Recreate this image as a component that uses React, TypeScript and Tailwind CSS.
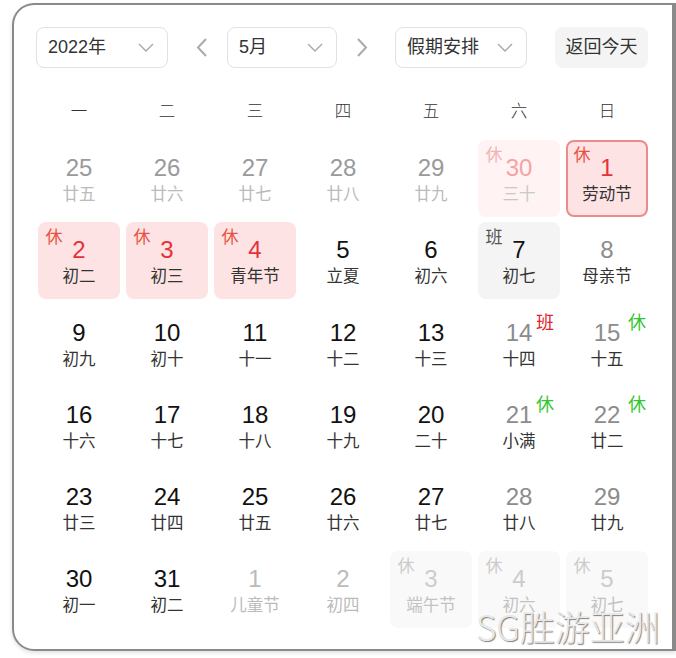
import React from "react";

type Kind =
  | "normal"
  | "weekend"
  | "prev"
  | "next"
  | "prevRest"
  | "rest"
  | "restSel"
  | "work"
  | "nextRest";

type Cell = {
  n: number;
  l: string;
  k: Kind;
  sup?: "班" | "休";
  supLeft?: string;
};

const cells: Cell[] = [
  { n: 25, l: "廿五", k: "prev" },
  { n: 26, l: "廿六", k: "prev" },
  { n: 27, l: "廿七", k: "prev" },
  { n: 28, l: "廿八", k: "prev" },
  { n: 29, l: "廿九", k: "prev" },
  { n: 30, l: "三十", k: "prevRest" },
  { n: 1, l: "劳动节", k: "restSel" },
  { n: 2, l: "初二", k: "rest" },
  { n: 3, l: "初三", k: "rest" },
  { n: 4, l: "青年节", k: "rest" },
  { n: 5, l: "立夏", k: "normal" },
  { n: 6, l: "初六", k: "normal" },
  { n: 7, l: "初七", k: "work" },
  { n: 8, l: "母亲节", k: "weekend" },
  { n: 9, l: "初九", k: "normal" },
  { n: 10, l: "初十", k: "normal" },
  { n: 11, l: "十一", k: "normal" },
  { n: 12, l: "十二", k: "normal" },
  { n: 13, l: "十三", k: "normal" },
  { n: 14, l: "十四", k: "weekend", sup: "班", supLeft: "sat" },
  { n: 15, l: "十五", k: "weekend", sup: "休", supLeft: "sun" },
  { n: 16, l: "十六", k: "normal" },
  { n: 17, l: "十七", k: "normal" },
  { n: 18, l: "十八", k: "normal" },
  { n: 19, l: "十九", k: "normal" },
  { n: 20, l: "二十", k: "normal" },
  { n: 21, l: "小满", k: "weekend", sup: "休", supLeft: "sat" },
  { n: 22, l: "廿二", k: "weekend", sup: "休", supLeft: "sun" },
  { n: 23, l: "廿三", k: "normal" },
  { n: 24, l: "廿四", k: "normal" },
  { n: 25, l: "廿五", k: "normal" },
  { n: 26, l: "廿六", k: "normal" },
  { n: 27, l: "廿七", k: "normal" },
  { n: 28, l: "廿八", k: "weekend" },
  { n: 29, l: "廿九", k: "weekend" },
  { n: 30, l: "初一", k: "normal" },
  { n: 31, l: "初二", k: "normal" },
  { n: 1, l: "儿童节", k: "next" },
  { n: 2, l: "初四", k: "next" },
  { n: 3, l: "端午节", k: "nextRest" },
  { n: 4, l: "初六", k: "nextRest" },
  { n: 5, l: "初七", k: "nextRest" },
];

const styles: Record<
  Kind,
  { box: string; num: string; lunar: string; tag?: string; tagText?: string }
> = {
  normal: { box: "border-transparent", num: "text-[#111]", lunar: "text-[#333]" },
  weekend: { box: "border-transparent", num: "text-[#8c8c8c]", lunar: "text-[#333]" },
  prev: { box: "border-transparent", num: "text-[#9a9a9a]", lunar: "text-[#bbbbbb]" },
  next: { box: "border-transparent", num: "text-[#bbbbbb]", lunar: "text-[#bbbbbb]" },
  prevRest: {
    box: "border-transparent bg-[#fff3f3]",
    num: "text-[#f4a3a3]",
    lunar: "text-[#c8c8c8]",
    tag: "text-[#f1b3b3]",
    tagText: "休",
  },
  rest: {
    box: "border-transparent bg-[#fde3e3]",
    num: "text-[#e5323a]",
    lunar: "text-[#333]",
    tag: "text-[#e8503f]",
    tagText: "休",
  },
  restSel: {
    box: "border-[#ec8b8b] bg-[#fde3e3]",
    num: "text-[#e5323a]",
    lunar: "text-[#333]",
    tag: "text-[#e8503f]",
    tagText: "休",
  },
  work: {
    box: "border-transparent bg-[#f4f4f4]",
    num: "text-[#111]",
    lunar: "text-[#333]",
    tag: "text-[#555]",
    tagText: "班",
  },
  nextRest: {
    box: "border-transparent bg-[#f9f9f9]",
    num: "text-[#cccccc]",
    lunar: "text-[#c2c2c2]",
    tag: "text-[#cccccc]",
    tagText: "休",
  },
};

function Chevron() {
  return (
    <svg width="16" height="9" viewBox="0 0 16 9" fill="none">
      <polyline points="1,1 8,8 15,1" stroke="#a8a8a8" strokeWidth="1.4" />
    </svg>
  );
}

function Arrow({ dir }: { dir: "left" | "right" }) {
  return (
    <svg width="11" height="19" viewBox="0 0 11 19" fill="none">
      {dir === "left" ? (
        <polyline points="10,1 2,9.5 10,18" stroke="#aaaaaa" strokeWidth="2" />
      ) : (
        <polyline points="1,1 9,9.5 1,18" stroke="#aaaaaa" strokeWidth="2" />
      )}
    </svg>
  );
}

function Select({ label, w }: { label: string; w: string }) {
  return (
    <div
      className={`${w} h-[41px] flex items-center justify-between pl-[11px] pr-[13px] border border-[#e2e2e2] rounded-[8px] text-[18px] text-[#333]`}
    >
      <span>{label}</span>
      <Chevron />
    </div>
  );
}

function DayCell({ c }: { c: Cell }) {
  const s = styles[c.k];
  return (
    <div
      className={`relative h-[76.5px] rounded-[8px] border-2 ${s.box} flex flex-col items-center pt-[12px]`}
    >
      {s.tag && (
        <span
          className={`absolute left-[5.5px] top-[5px] text-[17px] leading-[17px] ${s.tag}`}
        >
          {s.tagText}
        </span>
      )}
      <span className={`text-[24px] leading-[28px] ${s.num}`}>{c.n}</span>
      <span className={`mt-[2px] text-[16.5px] leading-[20px] ${s.lunar}`}>{c.l}</span>
      {c.sup && (
        <span
          className={`absolute top-[7.5px] text-[18px] leading-[18px] ${
            c.supLeft === "sat" ? "left-[56px]" : "left-[60px]"
          } ${c.sup === "班" ? "text-[#e4222c]" : "text-[#33c633]"}`}
        >
          {c.sup}
        </span>
      )}
    </div>
  );
}

export default function App() {
  const week = ["一", "二", "三", "四", "五", "六", "日"];
  return (
    <div
      className="w-[676px] h-[658px] bg-white overflow-hidden relative"
      style={{ fontFamily: '"Liberation Sans", "Noto Sans CJK SC", sans-serif' }}
    >
      <div className="ml-[12px] mt-[3px] w-[664px] h-[648px] border-y-2 border-l-2 border-r-4 border-[#8a8a8a] rounded-l-[22px] shadow-[0_2px_4px_rgba(0,0,0,0.12)] pl-[22px] pt-[22px]">
        <div className="w-[612px] flex items-center">
          <Select label="2022年" w="w-[132px]" />
          <div className="ml-[28px] mr-[20px] flex items-center">
            <Arrow dir="left" />
          </div>
          <Select label="5月" w="w-[110px]" />
          <div className="ml-[20px] mr-[27px] flex items-center">
            <Arrow dir="right" />
          </div>
          <Select label="假期安排" w="w-[132px]" />
          <div className="ml-auto w-[93px] h-[41px] flex items-center justify-center rounded-[8px] bg-[#f4f4f4] text-[18px] text-[#333]">
            返回今天
          </div>
        </div>

        <div className="ml-[2px] w-[610px] mt-[26px] grid grid-cols-7 gap-x-[6px] h-[34px] items-center">
          {week.map((w) => (
            <div key={w} className="text-center text-[16.5px] font-light text-[#333]">
              {w}
            </div>
          ))}
        </div>

        <div className="ml-[2px] w-[610px] mt-[12px] grid grid-cols-7 gap-x-[6px] gap-y-[5.8px]">
          {cells.map((c, i) => (
            <DayCell key={i} c={c} />
          ))}
        </div>
      </div>

      <div
        className="absolute left-[476px] top-[606px] text-[35px] leading-[40px] font-light text-[#e8e8e8] [text-shadow:1px_1px_1px_#808080] whitespace-nowrap"
        style={{ fontFamily: '"Noto Sans CJK SC", "Liberation Sans", sans-serif' }}
      >
        SG胜游亚洲
      </div>
    </div>
  );
}
